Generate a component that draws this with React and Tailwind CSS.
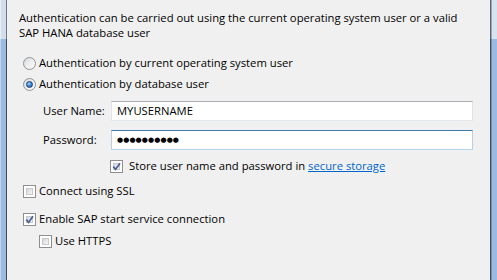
import React from "react";

function Radio({ checked }) {
  return (
    <span className="w-[13px] h-[13px] rounded-full border border-[#8f9399] bg-gradient-to-br from-[#d6d8db] via-[#eeeeee] to-[#fbfbfb] flex items-center justify-center shrink-0">
      {checked && (
        <span className="w-[7px] h-[7px] rounded-full border border-[#1d3f73] bg-[radial-gradient(circle_at_40%_35%,#9fdcff,#2f7fd0_55%,#16508f)]" />
      )}
    </span>
  );
}

function Check({ checked }) {
  return (
    <span className="relative w-[13px] h-[13px] border border-[#8e8f8f] bg-white p-[2px] shrink-0 flex">
      <span className="flex-1 border border-[#c6cad0] bg-gradient-to-br from-[#d3d6da] to-[#f6f6f6]" />
      {checked && (
        <svg className="absolute left-0 top-0" width="11" height="11" viewBox="0 0 11 11">
          <path d="M2.3 5.6 L4.6 8.4 L9 2.2" fill="none" stroke="#4a5f97" strokeWidth="1.7" strokeLinejoin="miter" strokeLinecap="butt" />
        </svg>
      )}
    </span>
  );
}

function FrameLeft() {
  return (
    <div className="w-[7px] flex flex-col shrink-0">
      <div className="h-[39px] flex">
        <div className="w-[1px] bg-[#e9eff6]" />
        <div className="w-[5px] bg-[#d2deec]" />
        <div className="w-[1px] bg-[#6b7888]" />
      </div>
      <div className="flex-1 flex">
        <div className="w-[1px] bg-[#c3d6ee]" />
        <div className="w-[5px] bg-[#9cbbe1]" />
        <div className="w-[1px] bg-[#3f4b5b]" />
      </div>
    </div>
  );
}

function FrameRight() {
  return (
    <div className="w-[7px] flex flex-col shrink-0">
      <div className="h-[39px] flex">
        <div className="w-[1px] bg-[#5a6676]" />
        <div className="w-[1px] bg-[#9aa8b8]" />
        <div className="w-[5px] bg-[#d8e3f0]" />
      </div>
      <div className="flex-1 flex">
        <div className="w-[1px] bg-[#3f4b5b]" />
        <div className="w-[1px] bg-[#7890ae]" />
        <div className="w-[5px] bg-[#9cbbe1]" />
      </div>
    </div>
  );
}

export default function App() {
  return (
    <div className="w-[497px] h-[280px] flex bg-[#f0f0f0] font-['Open_Sans',sans-serif] text-[11.25px] text-black overflow-hidden">
      <FrameLeft />
      <div className="flex-1 flex flex-col pl-[12px] pt-[10px]">
        <p className="leading-[15px] whitespace-nowrap">
          Authentication can be carried out using the current operating system user or a valid
          <br />
          SAP HANA database user
        </p>

        <label className="mt-[13px] ml-[4px] h-[20px] flex items-center gap-[3px]">
          <Radio />
          <span>Authentication by current operating system user</span>
        </label>
        <label className="mt-[1px] ml-[4px] h-[20px] flex items-center gap-[3px]">
          <Radio checked />
          <span>Authentication by database user</span>
        </label>

        <div className="mt-[7px] ml-[24px] h-[20px] flex items-center">
          <span className="w-[68px]">User Name:</span>
          <div className="w-[362px] h-[20px] bg-white border border-t-[#abadb3] border-x-[#e2e3ea] border-b-[#e3e9ef] flex items-center pl-[5px]">
            MYUSERNAME
          </div>
        </div>
        <div className="mt-[9px] ml-[24px] h-[20px] flex items-center">
          <span className="w-[68px]">Password:</span>
          <div className="w-[362px] h-[20px] bg-white border border-t-[#3d7bad] border-x-[#b5cfe7] border-b-[#b7d9ed] flex items-center pl-[5px]">
            <span className="font-['DejaVu_Sans',sans-serif] text-[7px] tracking-[0.1px] leading-none">●●●●●●●●●●</span>
          </div>
        </div>

        <label className="mt-[8px] ml-[91px] h-[16px] flex items-center gap-[6px]">
          <Check checked />
          <span>
            Store user name and password in{" "}
            <span className="text-[#0066cc] underline">secure storage</span>
          </span>
        </label>

        <label className="mt-[9px] ml-[4px] h-[16px] flex items-center gap-[3px]">
          <Check />
          <span>Connect using SSL</span>
        </label>
        <label className="mt-[12px] ml-[4px] h-[16px] flex items-center gap-[3px]">
          <Check checked />
          <span>Enable SAP start service connection</span>
        </label>
        <label className="mt-[6px] ml-[20px] h-[16px] flex items-center gap-[3px]">
          <Check />
          <span>Use HTTPS</span>
        </label>
      </div>
      <FrameRight />
    </div>
  );
}
